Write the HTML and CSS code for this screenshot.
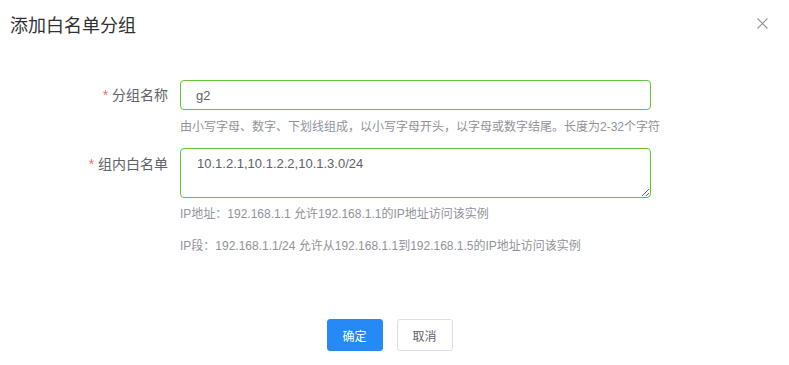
FILE: index.html
```html
<!DOCTYPE html>
<html lang="zh-CN">
<head>
<meta charset="utf-8">
<title>添加白名单分组</title>
<link rel="stylesheet" href="styles.css">
</head>
<body>
<div class="dialog">
  <div class="header">
    <span class="title">添加白名单分组</span>
    <button class="close" aria-label="关闭">
      <svg width="11" height="11" viewBox="0 0 11 11"><path d="M0.5 0.5 L10.5 10.5 M10.5 0.5 L0.5 10.5" stroke="#909399" stroke-width="1.1" fill="none"/></svg>
    </button>
  </div>
  <div class="body">
    <div class="form-item">
      <label class="label"><span class="req">*</span> 分组名称</label>
      <div class="content">
        <input class="input" type="text" value="g2">
        <div class="hint first">由小写字母、数字、下划线组成，以小写字母开头，以字母或数字结尾。长度为2-32个字符</div>
      </div>
    </div>
    <div class="form-item second">
      <label class="label"><span class="req">*</span> 组内白名单</label>
      <div class="content">
        <textarea class="textarea">10.1.2.1,10.1.2.2,10.1.3.0/24</textarea>
        <div class="hint ip1">IP地址：192.168.1.1 允许192.168.1.1的IP地址访问该实例</div>
        <div class="hint ip2">IP段：192.168.1.1/24 允许从192.168.1.1到192.168.1.5的IP地址访问该实例</div>
      </div>
    </div>
  </div>
  <div class="footer">
    <button class="btn primary">确定</button>
    <button class="btn">取消</button>
  </div>
</div>
</body>
</html>
```
FILE: styles.css
```css
html, body {
  margin: 0;
  padding: 0;
  background: #fff;
}
body {
  font-family: "Liberation Sans", "Noto Sans CJK SC", sans-serif;
  color: #606266;
  width: 789px;
  height: 365px;
  overflow: hidden;
}
.dialog {
  display: flex;
  flex-direction: column;
}
.header {
  display: flex;
  align-items: center;
  justify-content: space-between;
  padding: 14px 21px 0 10px;
  height: 24px;
}
.title {
  font-size: 18px;
  line-height: 24px;
  color: #303133;
}
.close {
  border: none;
  background: none;
  padding: 0;
  width: 11px;
  height: 11px;
  display: flex;
  margin-top: -6px;
}
.body {
  padding-top: 42px;
}
.form-item {
  display: flex;
}
.form-item.second {
  margin-top: 12px;
}
.label {
  width: 168px;
  padding-right: 12px;
  text-align: right;
  font-size: 14px;
  line-height: 30px;
  color: #606266;
}
.form-item.second .label {
  line-height: 32px;
}
.req {
  color: #f56c6c;
}
.content {
  width: 471px;
  display: flex;
  flex-direction: column;
}
.input {
  box-sizing: border-box;
  width: 471px;
  height: 30px;
  border: 1px solid #67c23a;
  border-radius: 4px;
  padding: 0 15px;
  font-family: inherit;
  font-size: 13px;
  color: #606266;
  outline: none;
}
.textarea {
  box-sizing: border-box;
  width: 471px;
  height: 50px;
  border: 1px solid #67c23a;
  border-radius: 4px;
  padding: 5px 16px;
  font-family: inherit;
  font-size: 13px;
  line-height: 19px;
  color: #606266;
  resize: vertical;
  outline: none;
  margin: 0;
  display: block;
}
.hint {
  font-size: 12px;
  line-height: 18px;
  color: #909399;
  white-space: nowrap;
}
.hint.first {
  margin-top: 8px;
}
.hint.ip1 {
  margin-top: 7px;
}
.hint.ip2 {
  margin-top: 14px;
}
.footer {
  display: flex;
  justify-content: center;
  gap: 14px;
  padding-right: 10px;
  margin-top: 64px;
}
.btn {
  box-sizing: border-box;
  width: 56px;
  height: 32px;
  border: 1px solid #dcdfe6;
  border-radius: 3px;
  background: #fff;
  color: #606266;
  font-family: inherit;
  font-size: 12px;
  padding: 0;
}
.btn.primary {
  background: #2589f6;
  border-color: #2589f6;
  color: #fff;
}
```
